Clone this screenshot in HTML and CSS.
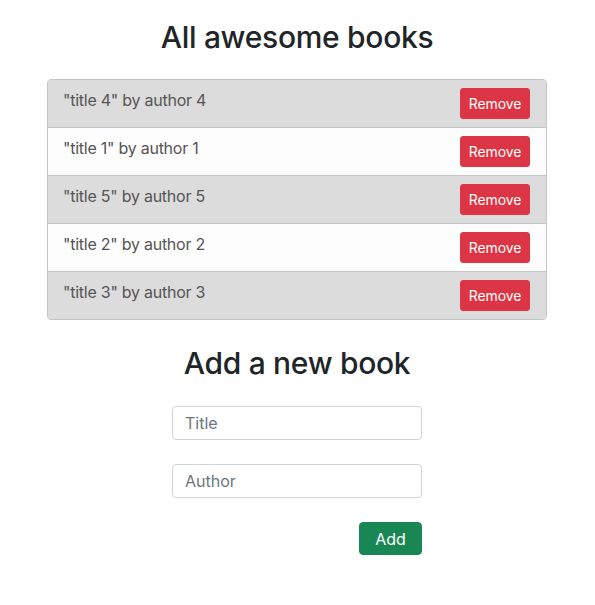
FILE: index.html
```html
<!DOCTYPE html>
<html>
<head>
<meta charset="utf-8">
<link rel="stylesheet" href="styles.css">
</head>
<body>
<main class="page">
  <h1 class="heading">All awesome books</h1>
  <ul class="book-list">
    <li class="book odd"><span class="book-text">"title 4" by author 4</span><button class="btn-remove">Remove</button></li>
    <li class="book even"><span class="book-text">"title 1" by author 1</span><button class="btn-remove">Remove</button></li>
    <li class="book odd"><span class="book-text">"title 5" by author 5</span><button class="btn-remove">Remove</button></li>
    <li class="book even"><span class="book-text">"title 2" by author 2</span><button class="btn-remove">Remove</button></li>
    <li class="book odd"><span class="book-text">"title 3" by author 3</span><button class="btn-remove">Remove</button></li>
  </ul>
  <h2 class="heading heading-add">Add a new book</h2>
  <form class="add-form">
    <input class="field" type="text" placeholder="Title">
    <input class="field" type="text" placeholder="Author">
    <button class="btn-add" type="button">Add</button>
  </form>
</main>
</body>
</html>
```

FILE: styles.css
```css
* { box-sizing: border-box; }
body {
  margin: 0;
  font-family: Inter, "Noto Sans", sans-serif;
  color: #212529;
  background: #fff;
}
.page {
  display: flex;
  flex-direction: column;
  align-items: center;
  padding-top: 19px;
  padding-right: 1px;
}
.heading {
  margin: 0;
  font-size: 30px;
  font-weight: 500;
  line-height: 37px;
  letter-spacing: -0.3px;
}
.book-list {
  list-style: none;
  margin: 23px 0 0;
  padding: 0;
  width: 500px;
  border: 1px solid #c4c4c4;
  border-radius: 4px;
  overflow: hidden;
}
.book {
  display: flex;
  justify-content: space-between;
  padding: 8px 16px 8px 15px;
  border-top: 1px solid #c4c4c4;
  height: 48px;
}
.book:first-child { border-top: none; height: 47px; }
.book.odd { background: #dcdcdc; }
.book.even { background: #fdfdfd; }
.book-text {
  font-size: 16px;
  line-height: 24px;
  letter-spacing: -0.25px;
  color: #555;
}
.btn-remove {
  font-family: inherit;
  font-size: 14px;
  line-height: 21px;
  letter-spacing: -0.1px;
  padding: 4px 6px;
  width: 70px;
  height: 31px;
  border: 1px solid #dc3545;
  border-radius: 3px;
  background: #dc3545;
  color: #fff;
}
.heading-add {
  margin-top: 25px;
}
.add-form {
  margin-top: 24px;
  width: 250px;
  display: flex;
  flex-direction: column;
  align-items: stretch;
  gap: 24px;
}
.field {
  height: 34px;
  padding: 4px 12px;
  font-family: inherit;
  font-size: 16px;
  color: #212529;
  border: 1px solid #ced4da;
  border-radius: 4px;
}
.field::placeholder { color: #6c757d; }
.btn-add {
  align-self: flex-end;
  width: 63px;
  height: 33px;
  font-family: inherit;
  font-size: 16px;
  border: 1px solid #198754;
  border-radius: 4px;
  background: #198754;
  color: #fff;
}
```
